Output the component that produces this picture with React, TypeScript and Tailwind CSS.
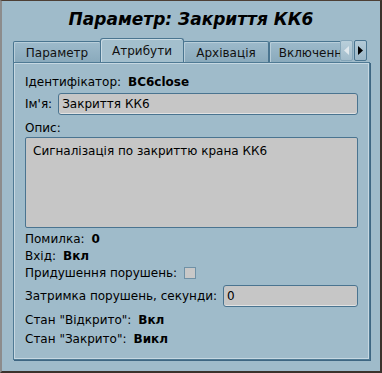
import { useState } from "react";

const font = "font-['DejaVu_Sans',sans-serif]";

function Tab({ label, active, width }: { label: string; active?: boolean; width: string }) {
  if (active) {
    return (
      <div
        className={`${width} relative z-10 -mx-px flex h-[24px] shrink-0 items-start justify-center rounded-t-[3px] border border-b-0 border-[#4a7590] bg-[#a3bfcd] pt-[3px] text-[12px] text-[#111] shadow-[inset_1px_1px_0_#c9dbe4]`}
      >
        {label}
      </div>
    );
  }
  return (
    <div
      className={`${width} flex h-[21px] shrink-0 items-center justify-center self-end whitespace-nowrap rounded-t-[2px] border border-b-0 border-[#4a7590] bg-gradient-to-b from-[#9dbacb] to-[#8aaabc] pt-px text-[12px] text-[#111] shadow-[inset_1px_1px_0_#b8ceda]`}
    >
      {label}
    </div>
  );
}

function Row({ label, value, className = "" }: { label: string; value: string; className?: string }) {
  return (
    <div className={`flex h-[17px] items-center gap-[7px] whitespace-nowrap ${className}`}>
      <span>{label}</span>
      <span className="font-bold">{value}</span>
    </div>
  );
}

export default function App() {
  const [name, setName] = useState("Закриття КК6");
  const [desc, setDesc] = useState("Сигналізація по закриттю крана КК6");
  const [delay, setDelay] = useState("0");
  const [suppress, setSuppress] = useState(false);

  return (
    <div
      className={`${font} flex h-[373px] w-[382px] flex-col border-t border-l-2 border-r-2 border-b-2 border-t-[#4d3f35] border-l-[#8c8c8c] border-r-[#3b322c] border-b-[#3b322c] bg-[#9fbbca] text-black`}
    >
      <div className="flex h-[37px] shrink-0 items-center justify-center pt-px text-[17px] font-bold italic">
        Параметр: Закриття КК6
      </div>

      <div className="ml-[11px] flex h-[24px] w-[354px] shrink-0 items-end">
        <div className="flex h-[24px] min-w-0 flex-1 items-end overflow-hidden">
          <Tab label="Параметр" width="w-[88px]" />
          <Tab label="Атрибути" width="w-[84px]" active />
          <Tab label="Архівація" width="w-[86px]" />
          <Tab label="Включення" width="w-[90px]" />
        </div>
        <div className="mb-px flex h-[21px] shrink-0 gap-px">
          <button className="flex w-[13px] items-center justify-center rounded-[2px] border border-[#84a5b8] bg-gradient-to-b from-[#b9cfda] to-[#a2bccb]">
            <svg width="5" height="9" viewBox="0 0 5 9"><path d="M5 0 L0 4.5 L5 9 Z" fill="#dfe8ed" /></svg>
          </button>
          <button className="flex w-[13px] items-center justify-center rounded-[2px] border border-[#4a7590] bg-gradient-to-b from-[#b3cad7] to-[#9bb7c7]">
            <svg width="5" height="9" viewBox="0 0 5 9"><path d="M0 0 L5 4.5 L0 9 Z" fill="#000" /></svg>
          </button>
        </div>
      </div>

      <div className="ml-[11px] h-[298px] w-[357px] shrink-0 border border-[#4f7a94] shadow-[inset_1px_1px_0_#c6d8e2,inset_-1px_-1px_0_#c6d8e2,1px_1px_0_#3e6682] px-[11px] pt-[10px] text-[12px]">
        <Row label="Ідентифікатор:" value="BC6close" className="h-[18px]" />

        <div className="mt-[2px] flex items-center gap-[6px]">
          <span>Ім'я:</span>
          <input
            value={name}
            onChange={(e) => setName(e.target.value)}
            className="h-[22px] min-w-0 flex-1 rounded-[3px] border border-[#4a7490] bg-[#c6c6c6] px-[3px] text-[12px] outline-none shadow-[inset_0_-1px_0_#e2e2e2]"
          />
        </div>

        <div className="mt-[4px] flex h-[18px] items-center">Опис:</div>

        <textarea
          value={desc}
          onChange={(e) => setDesc(e.target.value)}
          className="block h-[91px] w-full resize-none rounded-[2px] border border-[#4a7490] bg-[#c6c6c6] px-[7px] pt-[5px] text-[12px] leading-[16px] outline-none"
        />

        <Row label="Помилка:" value="0" className="mt-[2px]" />
        <Row label="Вхід:" value="Вкл" />
        <div className="flex h-[17px] items-center gap-[7px] whitespace-nowrap">
          <span>Придушення порушень:</span>
          <button
            onClick={() => setSuppress(!suppress)}
            className="flex h-[12px] w-[12px] items-center justify-center border border-[#6f91a6] bg-[#c8c8c8] text-[10px] leading-none"
          >
            {suppress ? "✓" : ""}
          </button>
        </div>

        <div className="mt-[4px] flex items-center gap-[6px]">
          <span className="shrink-0 whitespace-nowrap">Затримка порушень, секунди:</span>
          <input
            value={delay}
            onChange={(e) => setDelay(e.target.value)}
            className="h-[22px] min-w-0 flex-1 rounded-[3px] border border-[#4a7490] bg-[#c6c6c6] px-[3px] text-[12px] outline-none shadow-[inset_0_-1px_0_#e2e2e2]"
          />
        </div>

        <Row label='Стан "Відкрито":' value="Вкл" className="mt-[4px]" />
        <Row label='Стан "Закрито":' value="Викл" className="mt-[2px]" />
      </div>
    </div>
  );
}
